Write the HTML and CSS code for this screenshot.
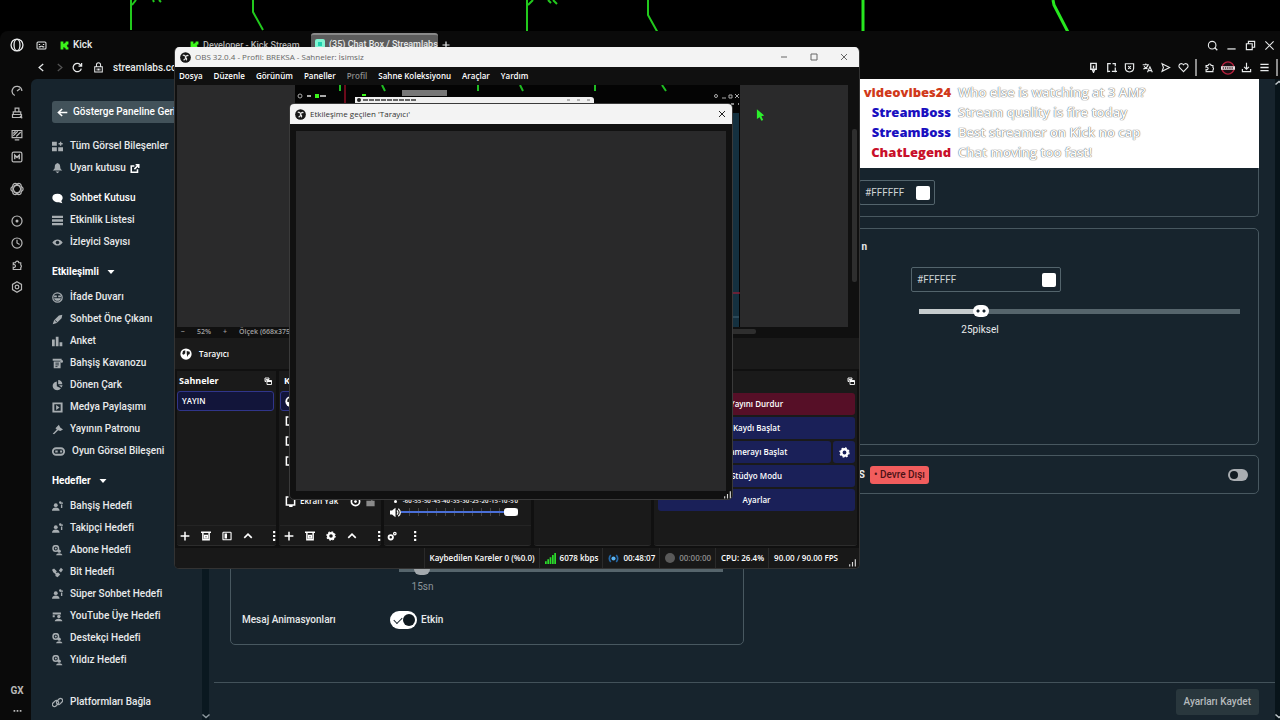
FILE: index.html
```html
<!DOCTYPE html>
<html lang="tr">
<head>
  <meta charset="UTF-8">
  <meta name="viewport" content="width=device-width, initial-scale=1.0">
  <title>Chat Box / Streamlabs</title>
  <link rel="stylesheet" href="styles.css">
</head>
<body>
  <!-- Icon set -->
  <svg class="sprite" aria-hidden="true">
    <symbol id="i-opera" viewBox="0 0 16 16"><circle cx="8" cy="8" r="6.8" fill="none" stroke="currentColor" stroke-width="1.5"/><ellipse cx="8" cy="8" rx="3.4" ry="6.5" fill="none" stroke="currentColor" stroke-width="1.5"/></symbol>
    <symbol id="i-box" viewBox="0 0 16 16"><rect x="1.5" y="3" width="13" height="10" rx="1.5" fill="none" stroke="currentColor" stroke-width="1.5"/><path d="M4 6.5h2M10 6.5h2M4 10h2l1-1h2l1 1h2" fill="none" stroke="currentColor" stroke-width="1.5"/></symbol>
    <symbol id="i-kick" viewBox="0 0 16 16"><path d="M1 1h5v4h2V3h2V1h5v5h-2v2h-1v1h1v2h2v4h-5v-2H8v-2H6v4H1z" fill="#3cf51b"/></symbol>
    <symbol id="i-back" viewBox="0 0 16 16"><path d="M10.5 3l-6 5 6 5" fill="none" stroke="currentColor" stroke-width="1.8"/></symbol>
    <symbol id="i-fwd" viewBox="0 0 16 16"><path d="M5.500 3l6 5-6 5" fill="none" stroke="currentColor" stroke-width="1.8"/></symbol>
    <symbol id="i-reload" viewBox="0 0 16 16"><path d="M13.500 9.500A6 6 0 1 1 12 4l1.500 2M14 1.500V6H9.500" fill="none" stroke="currentColor" stroke-width="1.8"/></symbol>
    <symbol id="i-lock" viewBox="0 0 16 16"><path d="M2.500 7h11v7.500h-11zM5 7V4a3 3 0 0 1 6 0v3M6 9.500v3M10 9.500v3M8 9.500v3" fill="none" stroke="currentColor" stroke-width="1.5"/></symbol>
    <symbol id="i-search" viewBox="0 0 16 16"><circle cx="7.500" cy="7.500" r="5.500" fill="none" stroke="currentColor" stroke-width="1.600"/><path d="M11 11l4 4" stroke="currentColor" stroke-width="1.800"/></symbol>
    <symbol id="i-min" viewBox="0 0 16 16"><path d="M2 13h12" stroke="currentColor" stroke-width="1.8"/></symbol>
    <symbol id="i-restore" viewBox="0 0 16 16"><path d="M2 5.500h8.500V14H2zM5 5V2h9v8.500h-3" fill="none" stroke="currentColor" stroke-width="1.700"/></symbol>
    <symbol id="i-close" viewBox="0 0 16 16"><path d="M2 2l12 12M14 2L2 14" stroke="currentColor" stroke-width="1.500"/></symbol>
    <symbol id="i-plus" viewBox="0 0 16 16"><path d="M8 1v14M1 8h14" stroke="currentColor" stroke-width="2.400"/></symbol>
    <symbol id="i-pin" viewBox="0 0 16 16"><path d="M4 2h8v8.500H4zM8 5v4M6 10.500h4L8 15z" fill="none" stroke="currentColor" stroke-width="2"/></symbol>
    <symbol id="i-crop" viewBox="0 0 16 16"><path d="M2.500 15V2.500H7M9.500 2.500h4V6M13.500 8v7M2 13.500h4M8.500 13.500H16" fill="none" stroke="currentColor" stroke-width="1.800"/></symbol>
    <symbol id="i-shield" viewBox="0 0 16 16"><path d="M2 2.500h12V9c0 3-3 5-6 5.500C5 14 2 12 2 9zM6 6l4 4M10 6l-4 4" fill="none" stroke="currentColor" stroke-width="1.700"/></symbol>
    <symbol id="i-translate" viewBox="0 0 16 16"><path d="M1 4h9M5.500 2v2M9 4c-1 3-4 5.500-7 6M3 6c1 2 3 3.500 5 4M8 15l3.500-8L15 15M9.500 12.500h4.500" fill="none" stroke="currentColor" stroke-width="1.600"/></symbol>
    <symbol id="i-play" viewBox="0 0 16 16"><path d="M3 2.500L14 8 3 13.500 5 8z" fill="none" stroke="currentColor" stroke-width="1.600"/></symbol>
    <symbol id="i-heart" viewBox="0 0 16 16"><path d="M8 14L2 8a3.600 3.600 0 1 1 6-4 3.600 3.600 0 1 1 6 4z" fill="none" stroke="currentColor" stroke-width="1.600"/></symbol>
    <symbol id="i-puzzle" viewBox="0 0 16 16"><path d="M3 5h3a2.200 2.200 0 1 1 4.400 0H13v3a2.200 2.200 0 0 1 0 3.500V14H3v-3a2 2 0 1 0 0-3.500z" fill="none" stroke="currentColor" stroke-width="1.600"/></symbol>
    <symbol id="i-badge" viewBox="0 0 16 16"><circle cx="8" cy="8" r="7" fill="#1b0e13" stroke="#b5213e" stroke-width="1.500"/><path d="M0 6h16v4H0z" fill="#e8e0e2"/><path d="M2 8h12" stroke="#45212b" stroke-width="1.500" stroke-dasharray="1.500 1"/></symbol>
    <symbol id="i-download" viewBox="0 0 16 16"><path d="M8 1v9M4.500 7L8 10.500 11.500 7M2 10v4h12v-4" fill="none" stroke="currentColor" stroke-width="1.700"/></symbol>
    <symbol id="i-menu" viewBox="0 0 16 16"><path d="M2 3.500h12M2 8h12M2 12.500h12" stroke="currentColor" stroke-width="2"/></symbol>
    <symbol id="i-gauge" viewBox="0 0 16 16"><path d="M5 14A6.500 6.500 0 1 1 14.500 8M8 8l4-3" fill="none" stroke="currentColor" stroke-width="1.700"/></symbol>
    <symbol id="i-broom" viewBox="0 0 16 16"><path d="M5.500 1.500h5v5h-5zM3 9.500v-3h10v3M2 14V10h12v4zM12 12l3 3" fill="none" stroke="currentColor" stroke-width="1.600"/></symbol>
    <symbol id="i-screen" viewBox="0 0 16 16"><path d="M1.500 2h13v9.500h-13zM5 14.500h6M3 9l6-6M7 10l6-6M3 6l3-3" fill="none" stroke="currentColor" stroke-width="1.600"/></symbol>
    <symbol id="i-mod" viewBox="0 0 16 16"><rect x="1.500" y="1.500" width="13" height="13" rx="2" fill="none" stroke="currentColor" stroke-width="1.700"/><path d="M5 11V5.500l3 3 3-3V11" fill="none" stroke="currentColor" stroke-width="1.900"/></symbol>
    <symbol id="i-gpt" viewBox="0 0 16 16"><g fill="none" stroke="currentColor" stroke-width="1.400"><ellipse cx="8" cy="8" rx="7" ry="4"/><ellipse cx="8" cy="8" rx="7" ry="4" transform="rotate(60 8 8)"/><ellipse cx="8" cy="8" rx="7" ry="4" transform="rotate(120 8 8)"/></g></symbol>
    <symbol id="i-target" viewBox="0 0 16 16"><circle cx="8" cy="8" r="6.700" fill="none" stroke="currentColor" stroke-width="1.600"/><circle cx="8" cy="8" r="2" fill="currentColor"/></symbol>
    <symbol id="i-clock" viewBox="0 0 16 16"><circle cx="8" cy="8" r="6.700" fill="none" stroke="currentColor" stroke-width="1.600"/><path d="M8 3.500V8l3.500 2" fill="none" stroke="currentColor" stroke-width="1.600"/></symbol>
    <symbol id="i-hex" viewBox="0 0 16 16"><path d="M8 1l6 3.500v7L8 15l-6-3.500v-7z" fill="none" stroke="currentColor" stroke-width="1.600"/><circle cx="8" cy="8" r="2.500" fill="none" stroke="currentColor" stroke-width="1.600"/></symbol>
    <symbol id="i-dots" viewBox="0 0 16 16"><path d="M1 7h3v3H1zM6.500 7h3v3h-3zM12 7h3v3h-3z" fill="currentColor"/></symbol>
    <symbol id="i-arrow" viewBox="0 0 16 16"><path d="M15 8H2M7.500 3L2 8l5.500 5" fill="none" stroke="currentColor" stroke-width="2.200"/></symbol>
    <symbol id="i-grid" viewBox="0 0 16 16"><path d="M0 1h7v6H0zM0 9h7v6H0zM9 9h7v6H9zM11.500 1h2v2h2v2h-2v2h-2V5h-2V3h2z" fill="currentColor"/></symbol>
    <symbol id="i-bell" viewBox="0 0 16 16"><path d="M8 0c3 1 4 3 4 6 0 2 1 3 3 5H1c2-2 3-3 3-5 0-3 1-5 4-6zM5 12.500h6L8 15z" fill="currentColor"/></symbol>
    <symbol id="i-ext" viewBox="0 0 16 16"><path d="M7 4H2v10h10V9M9 2h5v5M14 2L7 9" fill="none" stroke="currentColor" stroke-width="2.500"/></symbol>
    <symbol id="i-chat" viewBox="0 0 16 16"><path d="M8 1c5 0 7.500 3 7.500 6 0 2-1 3.500-2 4.500L15 15l-5-1.500C5 14 .5 11 .5 7S3 1 8 1z" fill="currentColor"/></symbol>
    <symbol id="i-list" viewBox="0 0 16 16"><path d="M0 1h16v3.500H0zM0 6.200h16v3.500H0zM0 11.500h16V15H0z" fill="currentColor"/></symbol>
    <symbol id="i-eye" viewBox="0 0 16 16"><path d="M.5 8C4 2 12 2 15.500 8 12 14 4 14 .5 8z" fill="currentColor"/><circle cx="8" cy="8" r="2.600" fill="#17242d"/></symbol>
    <symbol id="i-smile" viewBox="0 0 16 16"><circle cx="8" cy="8" r="6.800" fill="none" stroke="currentColor" stroke-width="1.800"/><path d="M3 5h4v2.500H3zM9 5h4v2.500H9zM3 9h10c-1 5-9 5-10 0z" fill="currentColor"/></symbol>
    <symbol id="i-pen" viewBox="0 0 16 16"><path d="M1 15l2-6 7-7 5-1-1 5-7 7zM4 10l3 3" fill="currentColor"/><path d="M4 9l4 3.500" stroke="#17242d" stroke-width="1.200"/></symbol>
    <symbol id="i-bars" viewBox="0 0 16 16"><path d="M0 5h4v10H0zM5.500 1h4v14h-4zM11 9h4v6h-4z" fill="currentColor"/></symbol>
    <symbol id="i-jar" viewBox="0 0 16 16"><path d="M1 1h13v3H1zM2.500 5h10v10h-10z" fill="currentColor"/><path d="M5 7.500h5M5 10h5M5 12.500h3" stroke="#17242d" stroke-width="1.200"/><circle cx="14" cy="5" r="2" fill="currentColor"/></symbol>
    <symbol id="i-pie" viewBox="0 0 16 16"><path d="M7 2v7l6 3A6.500 6.500 0 1 1 7 2zM9 0a6 6 0 0 1 6 6H9zM10 7.500h5.500L14 11z" fill="currentColor"/></symbol>
    <symbol id="i-media" viewBox="0 0 16 16"><path d="M2 2h12v12H2z" fill="none" stroke="currentColor" stroke-width="2.800"/><path d="M6 4.500l5 3.500-5 3.500z" fill="currentColor"/></symbol>
    <symbol id="i-hammer" viewBox="0 0 16 16"><path d="M1 14l6-6-2-2 5-5 2 4 4 3-4 2-3-1-6 6z" fill="currentColor"/></symbol>
    <symbol id="i-pad" viewBox="0 0 16 16"><rect x="1" y="4" width="14" height="8" rx="4" fill="none" stroke="currentColor" stroke-width="2.200"/><path d="M4 8h3M10 8h2.500" stroke="currentColor" stroke-width="2.200"/></symbol>
    <symbol id="i-people" viewBox="0 0 16 16"><circle cx="5.500" cy="6" r="2.800" fill="currentColor"/><path d="M0 14c0-6 11-6 11 0zM11.500 2H16v2h-4.500zM13 5h2v5h-2z" fill="currentColor"/><circle cx="12" cy="2" r="1.800" fill="currentColor"/></symbol>
    <symbol id="i-coins" viewBox="0 0 16 16"><circle cx="5.500" cy="5" r="4" fill="none" stroke="currentColor" stroke-width="2.200"/><circle cx="5.500" cy="5" r="1.500" fill="currentColor"/><circle cx="10.500" cy="9" r="2.400" fill="currentColor"/><path d="M6 15c0-4 9-4 9 0z" fill="currentColor"/></symbol>
    <symbol id="i-bits" viewBox="0 0 16 16"><path d="M0 4l3-2 4 4-2 4-3-2zM10 5l3-4 3 3-3 4zM5 9l4-1 3 3-4 4-3-2z" fill="currentColor"/></symbol>
    <symbol id="i-tube" viewBox="0 0 16 16"><path d="M1 2h12v3H1zM1 6h3v3H1z" fill="currentColor"/><circle cx="10" cy="8" r="2.500" fill="currentColor"/><path d="M4 15c0-5 11-5 11 0z" fill="currentColor"/></symbol>
    <symbol id="i-link" viewBox="0 0 16 16"><g fill="none" stroke="currentColor" stroke-width="1.800"><rect x="0" y="6.500" width="10" height="6" rx="3" transform="rotate(-45 5 9.500)"/><rect x="6" y="3.500" width="10" height="6" rx="3" transform="rotate(-45 11 6.500)"/></g></symbol>
    <symbol id="i-obs" viewBox="0 0 16 16"><circle cx="8" cy="8" r="7.800" fill="#161616"/><path d="M4 5c2-1 4 0 4 3 1-3 3-4 4-2M8 8c0 3-2 4-3 3M8 8c2 1 2 3 1 4" fill="none" stroke="#e6e6e6" stroke-width="1.700"/></symbol>
    <symbol id="i-globe" viewBox="0 0 16 16"><circle cx="8" cy="8" r="7.500" fill="#fff"/><path d="M4 4l3-1v4l-2 2-2-1zM9 4l4 1v3l-2 1-1 3-1-4z" fill="#1a1a1a"/></symbol>
    <symbol id="i-float" viewBox="0 0 16 16"><path d="M2 9V2h8v3H4v4zM6 7h9v8H6z" fill="none" stroke="currentColor" stroke-width="1.800"/><path d="M6 7h9v3H6z" fill="currentColor"/></symbol>
    <symbol id="i-trash" viewBox="0 0 16 16"><path d="M0 2h16M3 3v11h10V3M6 7h4v4H6z" fill="none" stroke="currentColor" stroke-width="2.400"/></symbol>
    <symbol id="i-filter" viewBox="0 0 16 16"><rect x="1.500" y="2" width="13" height="12" rx="1" fill="none" stroke="currentColor" stroke-width="1.800"/><path d="M4 4h4v8H4z" fill="currentColor"/></symbol>
    <symbol id="i-up" viewBox="0 0 16 16"><path d="M2 11l6-6 6 6" fill="none" stroke="currentColor" stroke-width="2.600"/></symbol>
    <symbol id="i-more" viewBox="0 0 16 16"><path d="M6.500 0h3.500v3.500H6.500zM6.500 6.200h3.500v3.500H6.500zM6.500 12.500h3.500V16H6.500z" fill="currentColor"/></symbol>
    <symbol id="i-gear" viewBox="0 0 16 16"><circle cx="8" cy="8" r="4.600" fill="none" stroke="currentColor" stroke-width="3.600"/><circle cx="8" cy="8" r="6.600" fill="none" stroke="currentColor" stroke-width="2" stroke-dasharray="2.600 2.580"/></symbol>
    <symbol id="i-gears" viewBox="0 0 16 16"><circle cx="6" cy="10" r="3.500" fill="none" stroke="currentColor" stroke-width="3"/><circle cx="12.500" cy="4" r="2" fill="none" stroke="currentColor" stroke-width="2"/></symbol>
    <symbol id="i-monitor" viewBox="0 0 16 16"><path d="M5 1.500H2v11.500h3M11 1.500h3V13H5M6 15h5" fill="none" stroke="currentColor" stroke-width="2.200"/></symbol>
    <symbol id="i-sound" viewBox="0 0 16 16"><path d="M0 5h3l5-4v14l-5-4H0z" fill="currentColor"/><path d="M10 5c2 1.500 2 4.500 0 6M12 2.500c4 3 4 8 0 11" fill="none" stroke="currentColor" stroke-width="1.800"/></symbol>
    <symbol id="i-signal" viewBox="0 0 16 16"><path d="M0 12h2.500v4H0zM3.400 9h2.500v7H3.400zM6.800 6h2.500v10H6.800zM10.200 3h2.500v13h-2.500zM13.500 0H16v16h-2.500z" fill="#2bdc2b"/></symbol>
    <symbol id="i-live" viewBox="0 0 16 16"><circle cx="8" cy="8" r="3" fill="#5ab4f5"/><path d="M4 3c-2.500 3-2.500 7 0 10M12 3c2.500 3 2.500 7 0 10" fill="none" stroke="#2468a8" stroke-width="2.400"/></symbol>
    <symbol id="i-grip" viewBox="0 0 16 16"><path d="M2 11h2v4H2zM7 7h2v8H7zM12 2h2v13h-2z" fill="#d8d8d8"/></symbol>
    <symbol id="i-chev" viewBox="0 0 16 16"><path d="M1 5l7 6 7-6" fill="none" stroke="currentColor" stroke-width="3"/></symbol>
    <symbol id="i-caret" viewBox="0 0 16 16"><path d="M1 4h14l-7 8z" fill="currentColor"/></symbol>
  </svg>

  <div class="desktop">
    <svg class="wallpaper" viewBox="0 0 1280 34" preserveAspectRatio="xMinYMin slice" aria-hidden="true">
      <g fill="none" stroke="#22c91d" stroke-width="2">
        <path d="M131 0v30M136 0l-4 5M153 0l1 2M159 0l2 2"/>
        <path d="M253 0v12l10 18"/>
        <path d="M527 0v34M533 0l-5 5M548 0l3 3M553 0l4 4"/>
        <path d="M648 0v15l10 18"/>
      </g>
      <path d="M863 0v34M1053 0l1 5 15 29" fill="none" stroke="#27e71f" stroke-width="3"/>
    </svg>

    <!-- Browser -->
    <div class="browser">
      <header class="tabstrip">
        <svg class="icon icon-lg"><use href="#i-opera"/></svg>
        <svg class="icon"><use href="#i-box"/></svg>
        <div class="tab tab-kick"><svg class="icon icon-sm"><use href="#i-kick"/></svg>Kick</div>
        <div class="tab tab-dev"><svg class="icon icon-sm"><use href="#i-kick"/></svg>Developer - Kick Stream</div>
        <div class="tab tab-active"><span class="tab-logo"></span>(35) Chat Box / Streamlabs</div>
        <button class="plain" aria-label="Yeni sekme"><svg class="icon icon-xs"><use href="#i-plus"/></svg></button>
        <div class="window-tools">
          <button class="plain" aria-label="Ara"><svg class="icon"><use href="#i-search"/></svg></button>
          <button class="plain" aria-label="Küçült"><svg class="icon"><use href="#i-min"/></svg></button>
          <button class="plain" aria-label="Geri yükle"><svg class="icon"><use href="#i-restore"/></svg></button>
          <button class="plain" aria-label="Kapat"><svg class="icon"><use href="#i-close"/></svg></button>
        </div>
      </header>
      <div class="toolbar">
        <button class="plain" aria-label="Geri"><svg class="icon"><use href="#i-back"/></svg></button>
        <button class="plain dim" aria-label="İleri"><svg class="icon"><use href="#i-fwd"/></svg></button>
        <button class="plain" aria-label="Yenile"><svg class="icon"><use href="#i-reload"/></svg></button>
        <svg class="icon lock"><use href="#i-lock"/></svg>
        <span class="url">streamlabs.com</span>
        <div class="toolbar-tools">
          <svg class="icon"><use href="#i-pin"/></svg>
          <svg class="icon"><use href="#i-crop"/></svg>
          <svg class="icon"><use href="#i-shield"/></svg>
          <svg class="icon"><use href="#i-translate"/></svg>
          <svg class="icon"><use href="#i-play"/></svg>
          <svg class="icon"><use href="#i-heart"/></svg>
          <span class="bar"></span>
          <svg class="icon"><use href="#i-puzzle"/></svg>
          <svg class="icon icon-lg"><use href="#i-badge"/></svg>
          <svg class="icon"><use href="#i-download"/></svg>
          <svg class="icon"><use href="#i-menu"/></svg>
          <span class="bar"></span>
        </div>
      </div>

      <div class="browser-body">
        <nav class="rail">
          <svg class="icon icon-rail"><use href="#i-gauge"/></svg>
          <svg class="icon icon-rail"><use href="#i-broom"/></svg>
          <svg class="icon icon-rail"><use href="#i-screen"/></svg>
          <svg class="icon icon-rail"><use href="#i-mod"/></svg>
          <svg class="icon icon-lg rail-gap"><use href="#i-gpt"/></svg>
          <svg class="icon icon-rail rail-gap"><use href="#i-target"/></svg>
          <svg class="icon icon-rail"><use href="#i-clock"/></svg>
          <svg class="icon icon-rail"><use href="#i-puzzle"/></svg>
          <svg class="icon icon-rail"><use href="#i-hex"/></svg>
          <span class="rail-gx">GX</span>
          <svg class="icon icon-sm"><use href="#i-dots"/></svg>
        </nav>

        <div class="page">
          <aside class="sidebar">
            <div class="sidebar-inner">
              <a class="back-link" href="#"><svg class="icon"><use href="#i-arrow"/></svg>Gösterge Paneline Geri</a>
              <ul class="menu">
                <li><a href="#"><svg class="icon"><use href="#i-grid"/></svg>Tüm Görsel Bileşenler</a></li>
                <li><a href="#"><svg class="icon"><use href="#i-bell"/></svg>Uyarı kutusu<svg class="icon ext"><use href="#i-ext"/></svg></a></li>
              </ul>
              <ul class="menu menu-spaced">
                <li><a class="current" href="#"><svg class="icon"><use href="#i-chat"/></svg>Sohbet Kutusu</a></li>
                <li><a href="#"><svg class="icon"><use href="#i-list"/></svg>Etkinlik Listesi</a></li>
                <li><a href="#"><svg class="icon"><use href="#i-eye"/></svg>İzleyici Sayısı</a></li>
              </ul>
              <h2>Etkileşimli <svg class="icon icon-xs"><use href="#i-caret"/></svg></h2>
              <ul class="menu">
                <li><a href="#"><svg class="icon"><use href="#i-smile"/></svg>İfade Duvarı</a></li>
                <li><a href="#"><svg class="icon"><use href="#i-pen"/></svg>Sohbet Öne Çıkanı</a></li>
                <li><a href="#"><svg class="icon"><use href="#i-bars"/></svg>Anket</a></li>
                <li><a href="#"><svg class="icon"><use href="#i-jar"/></svg>Bahşiş Kavanozu</a></li>
                <li><a href="#"><svg class="icon"><use href="#i-pie"/></svg>Dönen Çark</a></li>
                <li><a href="#"><svg class="icon"><use href="#i-media"/></svg>Medya Paylaşımı</a></li>
                <li><a href="#"><svg class="icon"><use href="#i-hammer"/></svg>Yayının Patronu</a></li>
                <li><a href="#"><svg class="icon icon-wide"><use href="#i-pad"/></svg>Oyun Görsel Bileşeni</a></li>
              </ul>
              <h2>Hedefler <svg class="icon icon-xs"><use href="#i-caret"/></svg></h2>
              <ul class="menu">
                <li><a href="#"><svg class="icon"><use href="#i-people"/></svg>Bahşiş Hedefi</a></li>
                <li><a href="#"><svg class="icon"><use href="#i-people"/></svg>Takipçi Hedefi</a></li>
                <li><a href="#"><svg class="icon"><use href="#i-coins"/></svg>Abone Hedefi</a></li>
                <li><a href="#"><svg class="icon"><use href="#i-bits"/></svg>Bit Hedefi</a></li>
                <li><a href="#"><svg class="icon"><use href="#i-people"/></svg>Süper Sohbet Hedefi</a></li>
                <li><a href="#"><svg class="icon"><use href="#i-tube"/></svg>YouTube Üye Hedefi</a></li>
                <li><a href="#"><svg class="icon"><use href="#i-coins"/></svg>Destekçi Hedefi</a></li>
                <li><a href="#"><svg class="icon"><use href="#i-coins"/></svg>Yıldız Hedefi</a></li>
              </ul>
              <ul class="menu menu-last">
                <li><a href="#"><svg class="icon"><use href="#i-link"/></svg>Platformları Bağla</a></li>
              </ul>
            </div>
            <div class="scrollbar"><svg class="icon icon-xs"><use href="#i-chev"/></svg></div>
          </aside>

          <main class="main">
            <div class="content">
              <section class="card card-left">
                <div class="duration">
                  <input type="range" class="range range-off" min="0" max="200" value="10" aria-label="Mesaj süresi" disabled>
                  <span class="range-value">15sn</span>
                </div>
                <div class="field">
                  <label for="anim">Mesaj Animasyonları</label>
                  <input type="checkbox" id="anim" class="toggle toggle-on" checked>
                  <span>Etkin</span>
                </div>
              </section>

              <div class="column">
                <div class="chat-preview">
                  <b class="orange">videovibes24</b><span>Who else is watching at 3 AM?</span>
                  <b class="blue">StreamBoss</b><span>Stream quality is fire today</span>
                  <b class="blue">StreamBoss</b><span>Best streamer on Kick no cap</span>
                  <b class="red">ChatLegend</b><span>Chat moving too fast!</span>
                </div>
                <section class="card card-color">
                  <div class="color-box color-box-small">
                    <input type="text" value="#FFFFFF" aria-label="Arka plan rengi">
                    <span class="swatch"></span>
                  </div>
                </section>
                <section class="card card-text">
                  <h3>n</h3>
                  <div class="text-fields">
                    <div class="color-box">
                      <input type="text" value="#FFFFFF" aria-label="Metin rengi">
                      <span class="swatch"></span>
                    </div>
                    <div class="size">
                      <input type="range" class="range" min="10" max="95" value="25" aria-label="Yazı boyutu">
                      <span class="range-value">25piksel</span>
                    </div>
                  </div>
                </section>
                <section class="card card-css">
                  <label for="css">Özel CSS</label>
                  <span class="pill">• Devre Dışı</span>
                  <input type="checkbox" id="css" class="toggle toggle-small">
                </section>
              </div>
            </div>
            <footer class="save-bar">
              <button class="save">Ayarları Kaydet</button>
            </footer>
          </main>
          <div class="page-scroll">
            <svg class="icon icon-xs flip"><use href="#i-chev"/></svg>
            <svg class="icon icon-xs"><use href="#i-chev"/></svg>
          </div>
        </div>
      </div>
    </div>

    <!-- OBS -->
    <div class="obs">
      <header class="titlebar">
        <svg class="icon"><use href="#i-obs"/></svg>
        <span>OBS 32.0.4 - Profil: BREKSA - Sahneler: İsimsiz</span>
        <button class="win-btn" aria-label="Küçült"><svg viewBox="0 0 8 8"><path d="M1 4h6" stroke="currentColor"/></svg></button>
        <button class="win-btn" aria-label="Büyüt"><svg viewBox="0 0 8 8"><path d="M1 1h6v6H1z" fill="none" stroke="currentColor"/></svg></button>
        <button class="win-btn" aria-label="Kapat"><svg viewBox="0 0 8 8"><path d="M1 1l6 6M7 1L1 7" stroke="currentColor"/></svg></button>
      </header>
      <nav class="obs-menu">
        <span>Dosya</span><span>Düzenle</span><span>Görünüm</span><span>Paneller</span><span class="off">Profil</span><span>Sahne Koleksiyonu</span><span>Araçlar</span><span>Yardım</span>
      </nav>

      <div class="preview">
        <div class="preview-area">
          <!-- captured desktop, scaled down -->
          <svg class="capture" viewBox="0 0 445 242" aria-hidden="true">
            <path d="M0 0h445v242H0z" fill="#040404"/>
            <path d="M438 28h6v214h-6z" fill="#14303f"/>
            <path d="M45 0v6M87 0l3 6M183 0v6M225 0l3 6M300 0v6M367 0l4 6" stroke="#1fbb22" stroke-width="2" fill="none"/>
            <path d="M50 0v20" stroke="#d01030"/>
            <path d="M107 5h45v6h-45z" fill="#777"/>
            <path d="M60 12h236q3 0 3 3v5H60z" fill="#f0f0f0"/>
            <circle cx="64" cy="15" r="2" fill="#222"/>
            <path d="M68 15h54" stroke="#666" stroke-width="2" stroke-dasharray="5 1"/>
            <path d="M272 15h3M282 15h3M292 15h3" stroke="#777"/>
            <circle cx="5" cy="11" r="2" fill="none" stroke="#aaa"/>
            <path d="M12 11h4M25 11h6" stroke="#aaa" stroke-width="2"/>
            <circle cx="421" cy="11" r="1.500" fill="none" stroke="#aaa"/>
            <path d="M427 13h4M434 10h3v3h-3zM440 9l4 4M444 9l-4 4" fill="none" stroke="#aaa"/>
            <path d="M20 9h4v4h-4zM67 9h4v2h-4z" fill="#3cf51b"/>
            <path d="M380 19h64" stroke="#888" stroke-width="2" stroke-dasharray="3 4"/>
            <path d="M430 208h16" stroke="#c01530"/>
            <path d="M438 232h6" stroke="#426274"/>
          </svg>
        </div>
        <div class="v-scroll"><span></span></div>
      </div>
      <div class="zoom-bar">
        <span>−</span><span>52%</span><span>+</span><span>Ölçek (668x375)</span>
        <div class="h-scroll"></div>
      </div>
      <div class="context-bar"><svg class="icon icon-md"><use href="#i-globe"/></svg>Tarayıcı</div>

      <div class="docks">
        <section class="dock dock-scenes">
          <h4>Sahneler <svg class="icon icon-xs"><use href="#i-float"/></svg></h4>
          <div class="dock-list"><div class="row selected">YAYIN</div></div>
          <div class="dock-tools">
            <svg class="icon"><use href="#i-plus"/></svg><svg class="icon"><use href="#i-trash"/></svg><svg class="icon"><use href="#i-filter"/></svg><svg class="icon"><use href="#i-up"/></svg><svg class="icon"><use href="#i-more"/></svg>
          </div>
        </section>
        <section class="dock dock-sources">
          <h4>Kaynaklar</h4>
          <div class="dock-list">
            <div class="row selected"><svg class="icon"><use href="#i-globe"/></svg></div>
            <div class="row"><svg class="icon"><use href="#i-monitor"/></svg></div>
            <div class="row"><svg class="icon"><use href="#i-monitor"/></svg></div>
            <div class="row"><svg class="icon"><use href="#i-monitor"/></svg></div>
            <div class="row"><svg class="icon"><use href="#i-more"/></svg></div>
            <div class="row"><svg class="icon"><use href="#i-monitor"/></svg><span>Ekran Yak</span>
              <svg class="icon" viewBox="0 0 16 16"><circle cx="8" cy="8" r="6" fill="none" stroke="#fff" stroke-width="2.400"/><circle cx="8" cy="8" r="2" fill="#fff"/></svg>
              <svg class="icon" viewBox="0 0 16 16"><path d="M2 7h12v8H2zM9 7V2h5v3" fill="#8a8a8a"/></svg>
            </div>
          </div>
          <div class="dock-tools">
            <svg class="icon"><use href="#i-plus"/></svg><svg class="icon"><use href="#i-trash"/></svg><svg class="icon"><use href="#i-gear"/></svg><svg class="icon"><use href="#i-up"/></svg><svg class="icon"><use href="#i-more"/></svg>
          </div>
        </section>
        <section class="dock dock-mixer">
          <div class="mixer">
            <div class="scale"><i></i><span>-60</span><span>-55</span><span>-50</span><span>-45</span><span>-40</span><span>-35</span><span>-30</span><span>-25</span><span>-20</span><span>-15</span><span>-10</span><span>-5</span><span>0</span></div>
            <div class="volume"><svg class="icon"><use href="#i-sound"/></svg><input type="range" min="0" max="100" value="100" aria-label="Ses düzeyi"></div>
          </div>
          <div class="dock-tools">
            <svg class="icon"><use href="#i-gears"/></svg><svg class="icon"><use href="#i-more"/></svg>
          </div>
        </section>
        <section class="dock dock-trans"></section>
        <section class="dock dock-controls">
          <h4><svg class="icon icon-xs"><use href="#i-float"/></svg></h4>
          <div class="controls">
            <button class="ctl stop">Yayını Durdur</button>
            <button class="ctl">Kaydı Başlat</button>
            <div class="ctl-pair">
              <button class="ctl">Sanal Kamerayı Başlat</button>
              <button class="ctl" aria-label="Kamera ayarları"><svg class="icon"><use href="#i-gear"/></svg></button>
            </div>
            <button class="ctl">Stüdyo Modu</button>
            <button class="ctl">Ayarlar</button>
          </div>
        </section>
      </div>

      <footer class="status">
        <span>Kaybedilen Kareler 0 (%0.0)</span>
        <span><svg class="icon"><use href="#i-signal"/></svg>6078 kbps</span>
        <span><svg class="icon"><use href="#i-live"/></svg>00:48:07</span>
        <span class="off"><i class="rec"></i>00:00:00</span>
        <span>CPU: 26.4%</span>
        <span>90.00 / 90.00 FPS</span>
        <svg class="icon icon-sm grip"><use href="#i-grip"/></svg>
      </footer>
    </div>

    <!-- Interaction dialog -->
    <div class="dialog" role="dialog" aria-labelledby="dialog-title">
      <header class="titlebar">
        <svg class="icon"><use href="#i-obs"/></svg>
        <span id="dialog-title">Etkileşime geçilen 'Tarayıcı'</span>
        <button class="win-btn" aria-label="Kapat"><svg viewBox="0 0 8 8"><path d="M1 1l6 6M7 1L1 7" stroke="currentColor"/></svg></button>
      </header>
      <div class="dialog-view"></div>
      <svg class="icon icon-sm grip"><use href="#i-grip"/></svg>
    </div>

    <svg class="cursor" viewBox="0 0 10 13" aria-hidden="true"><path d="M1 0l8 7-3 1 2 4-2 1-2-4-3 2z" fill="#2cf02c"/></svg>
  </div>
</body>
</html>
```

FILE: styles.css
```css
/* ===== Base ===== */
* {
  margin: 0;
  padding: 0;
  box-sizing: border-box;
}
html, body {
  height: 100%;
  overflow: hidden;
  background: #000;
  color: #e8eaeb;
  font-family: Roboto, "Liberation Sans", sans-serif;
  font-size: 10px;
  line-height: 14px;
}
button {
  border: none;
  background: none;
  color: inherit;
  font: inherit;
}
a {
  color: inherit;
  text-decoration: none;
}
ul {
  list-style: none;
}
.sprite {
  display: none;
}
.icon {
  width: 11px;
  height: 11px;
  flex: none;
  display: block;
}
.icon-xs { width: 8px; height: 8px; }
.icon-sm { width: 9px; height: 9px; }
.icon-md, .icon-rail { width: 12px; height: 12px; }
.icon-lg { width: 14px; height: 14px; }
.icon-wide { width: 13px; height: 13px; }

.desktop {
  position: relative;
  display: flex;
  flex-direction: column;
  height: 100vh;
}
.wallpaper {
  height: 31px;
  width: 100%;
  flex: none;
}

/* ===== Browser ===== */
.browser {
  flex: 1;
  min-height: 0;
  display: flex;
  flex-direction: column;
  background: #0a0a0a;
  border-radius: 8px 0 0 0;
}
.plain {
  display: flex;
  align-items: center;
}
.tabstrip {
  display: flex;
  align-items: center;
  height: 28px;
  padding: 0 5px 0 10px;
  gap: 12px;
  font-weight: 500;
}
.tab {
  display: flex;
  align-items: center;
  gap: 4px;
  white-space: nowrap;
}
.tab-kick {
  width: 118px;
  margin-left: 1px;
}
.tab-dev {
  width: 109px;
  color: #b5b5b5;
  font-size: 9px;
}
.tab-active {
  width: 127px;
  height: 26px;
  align-self: flex-end;
  padding: 0 4px 7px;
  background: #5c5c5c;
  border-top: 2px solid #8a8a8a;
  border-radius: 3px 3px 0 0;
  font-size: 9px;
}
.tab-logo {
  width: 10px;
  height: 10px;
  flex: none;
  border-radius: 2px;
  background: #20d0b0;
  border: 3px solid #80f5d2;
}
.tab-active + .plain {
  margin-left: -8px;
}
.window-tools {
  display: flex;
  gap: 8px;
  margin-left: auto;
}
.toolbar {
  display: flex;
  align-items: center;
  height: 20px;
  padding: 0 0 3px 36px;
  gap: 7px;
  font-weight: 500;
}
.toolbar .lock { margin: 0 2px 0 3px; }
.dim { color: #555; }
.toolbar-tools {
  display: flex;
  align-items: center;
  gap: 7px;
  margin-left: auto;
  padding-right: 2px;
}
.toolbar-tools .icon-lg { margin: 0 -1px; }
.bar {
  width: 2px;
  height: 17px;
  margin-left: -1px;
  background: #8c8c8c;
}
.browser-body {
  flex: 1;
  min-height: 0;
  display: flex;
}
.rail {
  width: 31px;
  padding: 6px 0 5px 3px;
  display: flex;
  flex-direction: column;
  align-items: center;
  gap: 10px;
  color: #b8b8b8;
}
.rail-gap { margin-top: 9px; }
.rail-gx {
  margin-top: auto;
  font-weight: 700;
  line-height: 11px;
}

/* ===== Streamlabs page ===== */
.page {
  flex: 1;
  min-width: 0;
  display: flex;
  background: #17242d;
  border-radius: 6px 0 0 0;
  overflow: hidden;
}
.sidebar {
  display: flex;
  width: 178px;
  flex: none;
  font-weight: 500;
}
.sidebar-inner {
  flex: 1;
  padding: 22px 12px 0 21px;
}
.back-link {
  display: flex;
  align-items: center;
  gap: 5px;
  height: 22px;
  padding: 0 5px;
  margin-bottom: 12px;
  background: #42525a;
  border-radius: 3px;
  color: #fff;
  white-space: nowrap;
}
.menu a {
  display: flex;
  align-items: center;
  gap: 7px;
  height: 22px;
  white-space: nowrap;
}
.menu .icon { color: #a7adb1; }
.menu .ext, .menu .current, .menu .current .icon { color: #fff; }
.menu .ext { margin-left: -3px; width: 10px; }
.menu-spaced { margin-top: 8px; }
.menu-last { margin-top: 20px; }
.sidebar h2 {
  display: flex;
  align-items: center;
  gap: 8px;
  height: 22px;
  margin: 8px 0 3px;
  color: #fff;
  font-size: 10px;
  font-weight: 700;
}
.scrollbar {
  width: 7px;
  display: flex;
  align-items: flex-end;
  background: #0a1820;
  color: #8c979d;
}
.page-scroll {
  width: 5px;
  display: flex;
  flex-direction: column;
  justify-content: space-between;
  background: #08141a;
  color: #c0c8cc;
}
.flip { transform: rotate(180deg); }
.main {
  flex: 1;
  min-width: 0;
  margin-left: 5px;
  display: flex;
  flex-direction: column;
}
.content {
  flex: 1;
  min-height: 0;
  display: grid;
  grid-template-columns: 514fr 503fr;
  gap: 12px;
  padding: 0 16px 37px;
}
.card {
  border: 1px solid #485860;
  border-radius: 5px;
}
.card-left {
  display: flex;
  flex-direction: column;
  justify-content: flex-end;
  gap: 17px;
  padding: 0 20px 15px 11px;
}
.duration {
  padding-left: 157px;
  color: #8b959a;
}
.duration .range-value {
  display: block;
  width: 47px;
  text-align: center;
  margin-top: 5px;
}
.field {
  display: flex;
  align-items: center;
  gap: 4px;
  font-weight: 500;
}
.field label { width: 144px; }
.column {
  display: flex;
  flex-direction: column;
}
.chat-preview {
  display: grid;
  grid-template-columns: 195px 1fr;
  align-content: start;
  column-gap: 7px;
  height: 89px;
  padding-top: 3px;
  background: #fff;
  font: 800 13px/20px "Open Sans", sans-serif;
}
.chat-preview b { text-align: right; font-weight: 800; }
.chat-preview span {
  color: #fff;
  font-weight: 600;
  text-shadow: 0 0 1px #555, 0 0 1px #777;
}
.orange { color: #d0391a; }
.blue { color: #1a10c0; }
.red { color: #c8102a; }
.card-color {
  border-top: none;
  border-radius: 0 0 5px 5px;
  padding: 12px 0 11px 102px;
  margin-bottom: 11px;
}
.color-box {
  display: flex;
  align-items: center;
  justify-content: space-between;
  width: 150px;
  height: 25px;
  padding: 0 4px 0 5px;
  border: 1px solid #53646c;
  border-radius: 2px;
}
.color-box-small { width: 76px; }
.color-box input {
  width: 48px;
  border: none;
  background: none;
  color: #cfd4d6;
  font: inherit;
}
.swatch {
  width: 14px;
  height: 14px;
  background: #fff;
  border-radius: 2px;
}
.card-text {
  height: 217px;
  padding: 11px 18px 0 0;
  margin-bottom: 10px;
}
.card-text h3 {
  width: 110px;
  text-align: right;
  font-size: 10px;
  font-weight: 700;
}
.text-fields {
  padding: 13px 0 0 154px;
}
.size {
  padding: 13px 0 0 8px;
}
.size .range-value {
  display: block;
  width: 122px;
  margin-top: 6px;
  text-align: center;
}
.card-css {
  display: flex;
  align-items: center;
  height: 39px;
  padding: 0 10px 0 0;
}
.card-css label {
  width: 108px;
  text-align: right;
  font-weight: 700;
}
.pill {
  margin-left: 5px;
  padding: 2px 4px;
  background: #f15d5d;
  border-radius: 3px;
  color: #4d1216;
  font-weight: 500;
}
.card-css .toggle { margin-left: auto; }

/* sliders and switches */
.range {
  appearance: none;
  display: block;
  width: 100%;
  height: 12px;
  background: linear-gradient(90deg, #c5cbcd 19%, #56656c 19%) center / 100% 5px no-repeat;
  border-radius: 3px;
}
.range::-webkit-slider-thumb {
  appearance: none;
  width: 16px;
  height: 12px;
  border-radius: 6px;
  background:
    radial-gradient(circle at 5px 6px, #17242d 1px, transparent 2px),
    radial-gradient(circle at 11px 6px, #17242d 1px, transparent 2px),
    #fff;
}
.range-off { background: linear-gradient(#56656c, #56656c) center / 100% 5px no-repeat; }
.range-off::-webkit-slider-thumb { background: #a3a9ad; }
.toggle {
  appearance: none;
  position: relative;
  border-radius: 9px;
}
.toggle-on {
  width: 27px;
  height: 18px;
  background: #fff;
}
.toggle-on::before {
  content: "";
  position: absolute;
  left: 4px;
  top: 6px;
  width: 7px;
  height: 4px;
  border: solid #17242d;
  border-width: 0 0 1px 1px;
  transform: rotate(-45deg);
}
.toggle-on::after {
  content: "";
  position: absolute;
  right: 2px;
  top: 3px;
  width: 12px;
  height: 12px;
  border-radius: 50%;
  background: #101a20;
}
.toggle-small {
  width: 20px;
  height: 12px;
  background: #a9adb1;
}
.toggle-small::after {
  content: "";
  position: absolute;
  left: 2px;
  top: 2px;
  width: 8px;
  height: 8px;
  border-radius: 50%;
  background: #101a20;
}
.save-bar {
  display: flex;
  justify-content: flex-end;
  height: 38px;
  padding: 6px 16px 5px;
  border-top: 1px solid #43525a;
}
.save {
  padding: 0 8px;
  background: #29373d;
  border-radius: 3px;
  color: #b5babc;
  font-weight: 500;
}

/* ===== OBS window ===== */
.obs {
  position: absolute;
  left: 174px;
  top: 47px;
  width: 686px;
  height: 522px;
  display: flex;
  flex-direction: column;
  background: #101010;
  border: 1px solid #333;
  border-top: none;
  border-radius: 5px;
  overflow: hidden;
  color: #fff;
  font: 600 8px/12px "Open Sans", sans-serif;
}
.titlebar {
  display: flex;
  align-items: center;
  height: 20px;
  padding-left: 5px;
  gap: 4px;
  background: #f3f3f3;
  color: #666;
  font: 400 8px/12px "Open Sans", sans-serif;
}
.titlebar span { flex: 1; }
.win-btn {
  width: 30px;
  margin-left: -4px;
  display: flex;
  justify-content: center;
}
.win-btn svg { width: 8px; height: 8px; }
.obs-menu {
  display: flex;
  align-items: center;
  gap: 11px;
  height: 18px;
  padding-left: 4px;
}
.off { color: #8c8c8c; }
.preview {
  display: flex;
  height: 242px;
  padding-left: 2px;
}
.preview-area {
  flex: 1;
  display: flex;
  justify-content: center;
  padding-left: 10px;
  background: #2a2a2b;
}
.capture { width: 445px; height: 242px; }
.v-scroll {
  width: 11px;
  padding: 44px 3px 0 4px;
}
.v-scroll span {
  display: block;
  width: 5px;
  height: 153px;
  border-radius: 2px;
  background: #2e2e2e;
}
.zoom-bar {
  display: flex;
  align-items: center;
  gap: 12px;
  height: 11px;
  padding: 0 103px 2px 6px;
  color: #a0a0a0;
  font-size: 7px;
}
.h-scroll {
  width: 280px;
  height: 5px;
  margin-left: auto;
  border-radius: 2px;
  background: #2e2e2e;
}
.context-bar {
  display: flex;
  align-items: center;
  gap: 7px;
  height: 31px;
  margin-bottom: 2px;
  padding-left: 5px;
  background: #1a1a1a;
}
.docks {
  flex: 1;
  min-height: 0;
  display: flex;
  gap: 3px;
  padding: 0 2px;
}
.dock {
  display: flex;
  flex-direction: column;
  background: #1a1a1a;
  border-bottom: 1px solid #2c2c2c;
  border-radius: 0 0 3px 3px;
}
.dock-scenes { width: 99px; }
.dock-sources { width: 102px; padding-left: 1px; }
.dock-mixer { width: 147px; }
.dock-trans { width: 117px; }
.dock-controls { flex: 1; }
.dock h4 {
  display: flex;
  align-items: center;
  justify-content: space-between;
  height: 19px;
  padding: 0 4px 0 2px;
  font-size: 9px;
  font-weight: 700;
}
.dock-sources h4 { padding-left: 4px; }
.dock-controls h4 { justify-content: flex-end; padding-right: 2px; }
.dock-list {
  flex: 1;
  min-height: 0;
  padding-top: 1px;
}
.row {
  display: flex;
  align-items: center;
  gap: 4px;
  height: 20px;
  padding-left: 4px;
  border: 1px solid transparent;
  border-radius: 3px;
}
.row span { width: 46px; white-space: nowrap; }
.row.selected {
  background: #12153a;
  border-color: #30358a;
}
.dock-scenes .row { margin-right: 2px; }
.dock-tools {
  display: flex;
  align-items: center;
  gap: 11px;
  height: 20px;
  padding: 0 0 0 3px;
  border-top: 1px solid #242424;
}
.dock-tools .icon { width: 10px; height: 10px; }
.dock-scenes .dock-tools .icon:last-child,
.dock-sources .dock-tools .icon:last-child { margin: 0 -3px 0 auto; }
.dock-sources .dock-tools { padding-left: 4px; }
.dock-mixer .dock-tools { gap: 13px; }
.mixer {
  flex: 1;
  display: flex;
  flex-direction: column;
  justify-content: flex-end;
  padding: 0 13px 6px 6px;
}
.scale {
  display: flex;
  justify-content: space-between;
  align-items: center;
  font-size: 6px;
  line-height: 8px;
}
.scale i {
  width: 3px;
  height: 3px;
  margin: 0 5px 0 4px;
  border-radius: 50%;
  background: #fff;
}
.volume {
  display: flex;
  align-items: center;
  height: 14px;
}
.volume input {
  appearance: none;
  flex: 1;
  min-width: 0;
  height: 8px;
  background:
    linear-gradient(#4a6fd8, #4a6fd8) center / 100% 2px no-repeat,
    repeating-linear-gradient(90deg, transparent 0 8px, #444 8px 9px);
}
.volume input::-webkit-slider-thumb {
  appearance: none;
  width: 14px;
  height: 8px;
  border-radius: 3px;
  background: #fff;
}
.controls {
  display: flex;
  flex-direction: column;
  gap: 2px;
  padding: 3px 2px 0 4px;
}
.ctl {
  flex: 1;
  min-height: 22px;
  display: flex;
  align-items: center;
  justify-content: center;
  background: #1a2058;
  border-radius: 3px;
}
.ctl.stop { background: #560f27; }
.ctl-pair {
  display: flex;
  gap: 2px;
}
.ctl-pair .ctl:last-child { flex: none; width: 22px; }
.status {
  display: flex;
  justify-content: flex-end;
  height: 20px;
  padding-right: 2px;
  margin-top: 2px;
  background: #181818;
}
.status span {
  display: flex;
  align-items: center;
  gap: 4px;
  padding: 0 4px 0 5px;
  border-left: 1px solid #2a2a2a;
}
.rec {
  width: 10px;
  height: 10px;
  border-radius: 50%;
  background: #5a5a5a;
}
.status .grip { margin: 10px 0 0 6px; }

/* ===== Interaction dialog ===== */
.dialog {
  position: absolute;
  left: 289px;
  top: 103px;
  width: 444px;
  height: 397px;
  display: flex;
  flex-direction: column;
  background: #111;
  border: 1px solid #3a3a3a;
  border-radius: 5px;
  overflow: hidden;
}
.dialog .titlebar { color: #333; }
.dialog .win-btn { width: 20px; color: #222; }
.dialog-view {
  flex: 1;
  margin: 7px 6px 8px;
  background: #29292a;
}
.dialog .grip {
  position: absolute;
  right: 0;
  bottom: 0;
}
.cursor {
  position: absolute;
  left: 756px;
  top: 109px;
  width: 9px;
  height: 12px;
}
```
